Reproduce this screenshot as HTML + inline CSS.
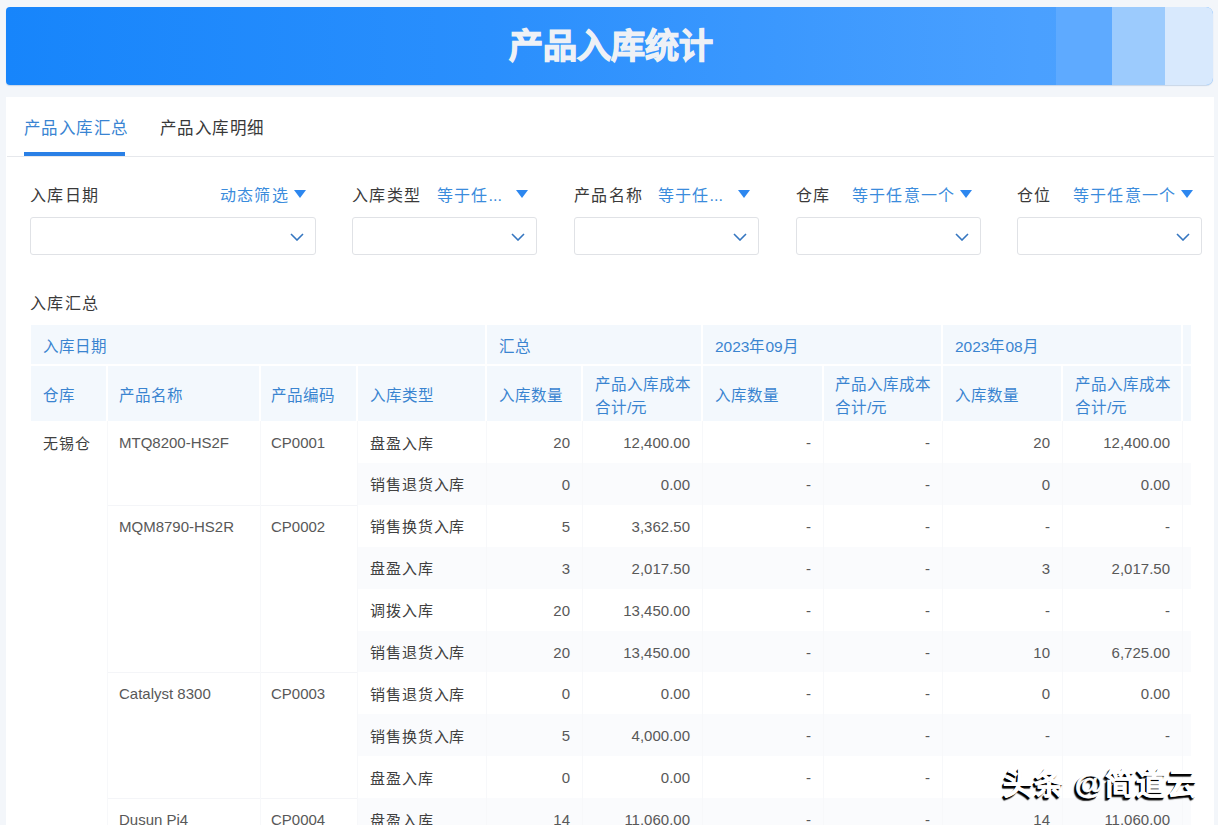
<!DOCTYPE html><html lang="zh-CN"><head><meta charset="utf-8"><style>
*{box-sizing:border-box;margin:0;padding:0}
html,body{width:1218px;height:825px;overflow:hidden}
body{background:#f3f6fa;font-family:'Liberation Sans', sans-serif;position:relative;color:#333}
.abs{position:absolute;white-space:nowrap}
.hdr{left:6px;top:7px;width:1207px;height:78px;border-radius:4px 7px 7px 4px;overflow:hidden;box-shadow:0 1px 1px rgba(30,90,160,0.2);
 background:linear-gradient(90deg,#1785fb 0%,#2a8ffd 40%,#4aa0ff 85%,#4ea3ff 100%)}
.seg{position:absolute;top:0;height:78px}
.title{left:0;top:7px;width:1218px;height:78px;line-height:78px;text-align:center;font-size:34px;font-weight:700;color:#eef1f6;-webkit-text-stroke:1.2px #eef1f6;padding-left:3px}
.panel{left:6px;top:97px;width:1208px;height:740px;background:#fff}
.tab{font-size:16.5px;line-height:24px;letter-spacing:0.4px}
.lbl{font-size:16px;line-height:24px;color:#3a3a3a;letter-spacing:1.4px}
.lnk{font-size:16px;line-height:24px;color:#3b8cdc;letter-spacing:1.2px}
.tri{width:0;height:0;border-left:6px solid transparent;border-right:6px solid transparent;border-top:8px solid #2d87ef}
.box{height:38px;border:1px solid #e0e2e6;border-radius:3px;background:#fff}
.chev{width:14px;height:8px}
.th{font-size:15.5px;line-height:24px;color:#3a84d0;letter-spacing:0px}
.td{font-size:15px;line-height:20px;color:#585858}
.tdz{font-size:15px;line-height:20px;color:#404040;letter-spacing:0.9px}
</style></head><body>
<div class="abs hdr">
<div class="seg" style="left:1050px;width:56px;background:#5eaaff"></div>
<div class="seg" style="left:1106px;width:53px;background:#9ccbfd"></div>
<div class="seg" style="left:1159px;width:48px;background:#d8e9fd"></div>
</div>
<div class="abs title">产品入库统计</div>
<div class="abs panel"></div>
<div class="abs tab" style="left:24px;top:116px;color:#3984d2">产品入库汇总</div>
<div class="abs tab" style="left:160px;top:116px;color:#383838">产品入库明细</div>
<div class="abs" style="left:7px;top:156px;width:1207px;height:1px;background:#e6e8ec"></div>
<div class="abs" style="left:24px;top:152px;width:101px;height:4px;background:#2a80e6"></div>
<div class="abs lbl" style="left:30px;top:184px">入库日期</div>
<div class="abs lnk" style="left:220px;top:184px">动态筛选</div>
<div class="abs tri" style="left:294px;top:190px"></div>
<div class="abs box" style="left:30px;top:217px;width:286px"></div>
<svg class="abs" style="left:290px;top:233px" width="14" height="8" viewBox="0 0 14 8"><path d="M1 1 L7 7 L13 1" fill="none" stroke="#3576c0" stroke-width="1.6"/></svg>
<div class="abs lbl" style="left:352px;top:184px">入库类型</div>
<div class="abs lnk" style="left:437px;top:184px">等于任<span style="letter-spacing:0">...</span></div>
<div class="abs tri" style="left:516px;top:190px"></div>
<div class="abs box" style="left:352px;top:217px;width:185px"></div>
<svg class="abs" style="left:511px;top:233px" width="14" height="8" viewBox="0 0 14 8"><path d="M1 1 L7 7 L13 1" fill="none" stroke="#3576c0" stroke-width="1.6"/></svg>
<div class="abs lbl" style="left:574px;top:184px">产品名称</div>
<div class="abs lnk" style="left:658px;top:184px">等于任<span style="letter-spacing:0">...</span></div>
<div class="abs tri" style="left:738px;top:190px"></div>
<div class="abs box" style="left:574px;top:217px;width:185px"></div>
<svg class="abs" style="left:733px;top:233px" width="14" height="8" viewBox="0 0 14 8"><path d="M1 1 L7 7 L13 1" fill="none" stroke="#3576c0" stroke-width="1.6"/></svg>
<div class="abs lbl" style="left:796px;top:184px">仓库</div>
<div class="abs lnk" style="left:852px;top:184px">等于任意一个</div>
<div class="abs tri" style="left:960px;top:190px"></div>
<div class="abs box" style="left:796px;top:217px;width:185px"></div>
<svg class="abs" style="left:955px;top:233px" width="14" height="8" viewBox="0 0 14 8"><path d="M1 1 L7 7 L13 1" fill="none" stroke="#3576c0" stroke-width="1.6"/></svg>
<div class="abs lbl" style="left:1017px;top:184px">仓位</div>
<div class="abs lnk" style="left:1073px;top:184px">等于任意一个</div>
<div class="abs tri" style="left:1181px;top:190px"></div>
<div class="abs box" style="left:1017px;top:217px;width:185px"></div>
<svg class="abs" style="left:1176px;top:233px" width="14" height="8" viewBox="0 0 14 8"><path d="M1 1 L7 7 L13 1" fill="none" stroke="#3576c0" stroke-width="1.6"/></svg>
<div class="abs lbl" style="left:30px;top:292px">入库汇总</div>
<div class="abs" style="left:31px;top:325px;width:1160px;height:96px;background:#f3f8fd"></div>
<div class="abs" style="left:31px;top:364px;width:1160px;height:2px;background:#fff"></div>
<div class="abs" style="left:485px;top:325px;width:2px;height:39px;background:#fff"></div>
<div class="abs" style="left:701px;top:325px;width:2px;height:39px;background:#fff"></div>
<div class="abs" style="left:941px;top:325px;width:2px;height:39px;background:#fff"></div>
<div class="abs" style="left:1181px;top:325px;width:2px;height:39px;background:#fff"></div>
<div class="abs" style="left:106px;top:366px;width:2px;height:55px;background:#fff"></div>
<div class="abs" style="left:259px;top:366px;width:2px;height:55px;background:#fff"></div>
<div class="abs" style="left:356px;top:366px;width:2px;height:55px;background:#fff"></div>
<div class="abs" style="left:485px;top:366px;width:2px;height:55px;background:#fff"></div>
<div class="abs" style="left:581px;top:366px;width:2px;height:55px;background:#fff"></div>
<div class="abs" style="left:701px;top:366px;width:2px;height:55px;background:#fff"></div>
<div class="abs" style="left:822px;top:366px;width:2px;height:55px;background:#fff"></div>
<div class="abs" style="left:941px;top:366px;width:2px;height:55px;background:#fff"></div>
<div class="abs" style="left:1061px;top:366px;width:2px;height:55px;background:#fff"></div>
<div class="abs" style="left:1181px;top:366px;width:2px;height:55px;background:#fff"></div>
<div class="abs th" style="left:43px;top:335px">入库日期</div>
<div class="abs th" style="left:499px;top:335px">汇总</div>
<div class="abs th" style="left:715px;top:335px">2023年09月</div>
<div class="abs th" style="left:955px;top:335px">2023年08月</div>
<div class="abs th" style="left:43px;top:384px">仓库</div>
<div class="abs th" style="left:119px;top:384px">产品名称</div>
<div class="abs th" style="left:271px;top:384px">产品编码</div>
<div class="abs th" style="left:370px;top:384px">入库类型</div>
<div class="abs th" style="left:499px;top:384px">入库数量</div>
<div class="abs th" style="left:715px;top:384px">入库数量</div>
<div class="abs th" style="left:955px;top:384px">入库数量</div>
<div class="abs th" style="left:595px;top:373px;line-height:23px">产品入库成本<br>合计/元</div>
<div class="abs th" style="left:835px;top:373px;line-height:23px">产品入库成本<br>合计/元</div>
<div class="abs th" style="left:1075px;top:373px;line-height:23px">产品入库成本<br>合计/元</div>
<div class="abs" style="left:357px;top:421.0px;width:834px;height:41.9px;background:#ffffff"></div>
<div class="abs tdz" style="left:370px;top:433.5px">盘盈入库</div>
<div class="abs td" style="left:370px;width:200px;text-align:right;top:433.0px">20</div>
<div class="abs td" style="left:490px;width:200px;text-align:right;top:433.0px">12,400.00</div>
<div class="abs td" style="left:611px;width:200px;text-align:right;top:433.0px">-</div>
<div class="abs td" style="left:730px;width:200px;text-align:right;top:433.0px">-</div>
<div class="abs td" style="left:850px;width:200px;text-align:right;top:433.0px">20</div>
<div class="abs td" style="left:970px;width:200px;text-align:right;top:433.0px">12,400.00</div>
<div class="abs" style="left:357px;top:462.9px;width:834px;height:41.9px;background:#fafbfd"></div>
<div class="abs tdz" style="left:370px;top:475.4px">销售退货入库</div>
<div class="abs td" style="left:370px;width:200px;text-align:right;top:474.9px">0</div>
<div class="abs td" style="left:490px;width:200px;text-align:right;top:474.9px">0.00</div>
<div class="abs td" style="left:611px;width:200px;text-align:right;top:474.9px">-</div>
<div class="abs td" style="left:730px;width:200px;text-align:right;top:474.9px">-</div>
<div class="abs td" style="left:850px;width:200px;text-align:right;top:474.9px">0</div>
<div class="abs td" style="left:970px;width:200px;text-align:right;top:474.9px">0.00</div>
<div class="abs" style="left:357px;top:504.8px;width:834px;height:41.9px;background:#ffffff"></div>
<div class="abs tdz" style="left:370px;top:517.3px">销售换货入库</div>
<div class="abs td" style="left:370px;width:200px;text-align:right;top:516.8px">5</div>
<div class="abs td" style="left:490px;width:200px;text-align:right;top:516.8px">3,362.50</div>
<div class="abs td" style="left:611px;width:200px;text-align:right;top:516.8px">-</div>
<div class="abs td" style="left:730px;width:200px;text-align:right;top:516.8px">-</div>
<div class="abs td" style="left:850px;width:200px;text-align:right;top:516.8px">-</div>
<div class="abs td" style="left:970px;width:200px;text-align:right;top:516.8px">-</div>
<div class="abs" style="left:357px;top:546.7px;width:834px;height:41.9px;background:#fafbfd"></div>
<div class="abs tdz" style="left:370px;top:559.2px">盘盈入库</div>
<div class="abs td" style="left:370px;width:200px;text-align:right;top:558.7px">3</div>
<div class="abs td" style="left:490px;width:200px;text-align:right;top:558.7px">2,017.50</div>
<div class="abs td" style="left:611px;width:200px;text-align:right;top:558.7px">-</div>
<div class="abs td" style="left:730px;width:200px;text-align:right;top:558.7px">-</div>
<div class="abs td" style="left:850px;width:200px;text-align:right;top:558.7px">3</div>
<div class="abs td" style="left:970px;width:200px;text-align:right;top:558.7px">2,017.50</div>
<div class="abs" style="left:357px;top:588.6px;width:834px;height:41.9px;background:#ffffff"></div>
<div class="abs tdz" style="left:370px;top:601.1px">调拨入库</div>
<div class="abs td" style="left:370px;width:200px;text-align:right;top:600.6px">20</div>
<div class="abs td" style="left:490px;width:200px;text-align:right;top:600.6px">13,450.00</div>
<div class="abs td" style="left:611px;width:200px;text-align:right;top:600.6px">-</div>
<div class="abs td" style="left:730px;width:200px;text-align:right;top:600.6px">-</div>
<div class="abs td" style="left:850px;width:200px;text-align:right;top:600.6px">-</div>
<div class="abs td" style="left:970px;width:200px;text-align:right;top:600.6px">-</div>
<div class="abs" style="left:357px;top:630.5px;width:834px;height:41.9px;background:#fafbfd"></div>
<div class="abs tdz" style="left:370px;top:643.0px">销售退货入库</div>
<div class="abs td" style="left:370px;width:200px;text-align:right;top:642.5px">20</div>
<div class="abs td" style="left:490px;width:200px;text-align:right;top:642.5px">13,450.00</div>
<div class="abs td" style="left:611px;width:200px;text-align:right;top:642.5px">-</div>
<div class="abs td" style="left:730px;width:200px;text-align:right;top:642.5px">-</div>
<div class="abs td" style="left:850px;width:200px;text-align:right;top:642.5px">10</div>
<div class="abs td" style="left:970px;width:200px;text-align:right;top:642.5px">6,725.00</div>
<div class="abs" style="left:357px;top:672.4px;width:834px;height:41.9px;background:#ffffff"></div>
<div class="abs tdz" style="left:370px;top:684.9px">销售退货入库</div>
<div class="abs td" style="left:370px;width:200px;text-align:right;top:684.4px">0</div>
<div class="abs td" style="left:490px;width:200px;text-align:right;top:684.4px">0.00</div>
<div class="abs td" style="left:611px;width:200px;text-align:right;top:684.4px">-</div>
<div class="abs td" style="left:730px;width:200px;text-align:right;top:684.4px">-</div>
<div class="abs td" style="left:850px;width:200px;text-align:right;top:684.4px">0</div>
<div class="abs td" style="left:970px;width:200px;text-align:right;top:684.4px">0.00</div>
<div class="abs" style="left:357px;top:714.3px;width:834px;height:41.9px;background:#fafbfd"></div>
<div class="abs tdz" style="left:370px;top:726.8px">销售换货入库</div>
<div class="abs td" style="left:370px;width:200px;text-align:right;top:726.3px">5</div>
<div class="abs td" style="left:490px;width:200px;text-align:right;top:726.3px">4,000.00</div>
<div class="abs td" style="left:611px;width:200px;text-align:right;top:726.3px">-</div>
<div class="abs td" style="left:730px;width:200px;text-align:right;top:726.3px">-</div>
<div class="abs td" style="left:850px;width:200px;text-align:right;top:726.3px">-</div>
<div class="abs td" style="left:970px;width:200px;text-align:right;top:726.3px">-</div>
<div class="abs" style="left:357px;top:756.2px;width:834px;height:41.9px;background:#ffffff"></div>
<div class="abs tdz" style="left:370px;top:768.7px">盘盈入库</div>
<div class="abs td" style="left:370px;width:200px;text-align:right;top:768.2px">0</div>
<div class="abs td" style="left:490px;width:200px;text-align:right;top:768.2px">0.00</div>
<div class="abs td" style="left:611px;width:200px;text-align:right;top:768.2px">-</div>
<div class="abs td" style="left:730px;width:200px;text-align:right;top:768.2px">-</div>
<div class="abs td" style="left:850px;width:200px;text-align:right;top:768.2px"></div>
<div class="abs td" style="left:970px;width:200px;text-align:right;top:768.2px"></div>
<div class="abs" style="left:357px;top:798.1px;width:834px;height:41.9px;background:#fafbfd"></div>
<div class="abs tdz" style="left:370px;top:810.6px">盘盈入库</div>
<div class="abs td" style="left:370px;width:200px;text-align:right;top:810.1px">14</div>
<div class="abs td" style="left:490px;width:200px;text-align:right;top:810.1px">11,060.00</div>
<div class="abs td" style="left:611px;width:200px;text-align:right;top:810.1px">-</div>
<div class="abs td" style="left:730px;width:200px;text-align:right;top:810.1px">-</div>
<div class="abs td" style="left:850px;width:200px;text-align:right;top:810.1px">14</div>
<div class="abs td" style="left:970px;width:200px;text-align:right;top:810.1px">11,060.00</div>
<div class="abs td" style="left:119px;top:433.0px">MTQ8200-HS2F</div>
<div class="abs td" style="left:271px;top:433.0px">CP0001</div>
<div class="abs td" style="left:119px;top:516.8px">MQM8790-HS2R</div>
<div class="abs td" style="left:271px;top:516.8px">CP0002</div>
<div class="abs" style="left:107px;top:504.8px;width:250px;height:1px;background:#f4f5f8"></div>
<div class="abs td" style="left:119px;top:684.4px">Catalyst 8300</div>
<div class="abs td" style="left:271px;top:684.4px">CP0003</div>
<div class="abs" style="left:107px;top:672.4px;width:250px;height:1px;background:#f4f5f8"></div>
<div class="abs td" style="left:119px;top:810.1px">Dusun Pi4</div>
<div class="abs td" style="left:271px;top:810.1px">CP0004</div>
<div class="abs" style="left:107px;top:798.1px;width:250px;height:1px;background:#f4f5f8"></div>
<div class="abs tdz" style="left:43px;top:433.5px">无锡仓</div>
<div class="abs" style="left:107px;top:421px;width:1px;height:410px;background:#f7f8fa"></div>
<div class="abs" style="left:260px;top:421px;width:1px;height:410px;background:#f7f8fa"></div>
<div class="abs" style="left:357px;top:421px;width:1px;height:410px;background:#f7f8fa"></div>
<div class="abs" style="left:486px;top:421px;width:1px;height:410px;background:#f7f8fa"></div>
<div class="abs" style="left:582px;top:421px;width:1px;height:410px;background:#f7f8fa"></div>
<div class="abs" style="left:702px;top:421px;width:1px;height:410px;background:#f7f8fa"></div>
<div class="abs" style="left:823px;top:421px;width:1px;height:410px;background:#f7f8fa"></div>
<div class="abs" style="left:942px;top:421px;width:1px;height:410px;background:#f7f8fa"></div>
<div class="abs" style="left:1062px;top:421px;width:1px;height:410px;background:#f7f8fa"></div>
<div class="abs" style="left:1182px;top:421px;width:1px;height:410px;background:#f7f8fa"></div>
<div class="abs" style="left:1003px;top:764px;font-size:30px;line-height:40px;font-weight:700;letter-spacing:1.1px;color:#fff;-webkit-text-stroke:0.6px #fff;text-shadow:-1px 1px 0 #000,-2px 2px 0 #000,-2.5px 2.5px 1px rgba(0,0,0,0.8)">头条 @简道云</div>
</body></html>
